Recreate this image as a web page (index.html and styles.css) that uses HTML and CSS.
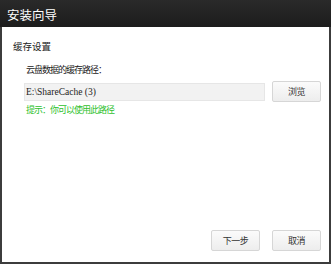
FILE: index.html
```html
<!DOCTYPE html>
<html lang="zh-CN">
<head>
    <meta charset="UTF-8">
    <title>安装向导</title>
    <link rel="stylesheet" href="styles.css">
</head>
<body>
    <div class="wizard">
        <div class="titlebar">安装向导</div>
        <div class="content">
            <div class="section">缓存设置</div>
            <div class="field">
                <div class="label">云盘数据的缓存路径：</div>
                <div class="path-row">
                    <div class="path-input">E:\ShareCache (3)</div>
                    <button class="btn">浏览</button>
                </div>
                <div class="hint">提示：你可以使用此路径</div>
            </div>
            <div class="footer">
                <button class="btn">下一步</button>
                <button class="btn">取消</button>
            </div>
        </div>
    </div>
</body>
</html>
```

FILE: styles.css
```css
html, body { margin: 0; padding: 0; }
body { font-family: "Noto Sans CJK SC", "Noto Sans", sans-serif; width: 331px; height: 264px; overflow: hidden; background: #fff; }
.wizard { width: 331px; height: 264px; display: flex; flex-direction: column; }
.titlebar { height: 27px; background: linear-gradient(#2a2a2a, #1c1c1c); color: #fff; font-size: 12.5px; line-height: 29px; padding-left: 7px; }
.content { flex: 1; display: flex; flex-direction: column; border: 2px solid #3c3c3c; border-top: none; background: #fff; }
.section { font-size: 9.5px; color: #222; padding: 12px 0 0 11px; line-height: 14px; }
.field { padding: 11px 0 0 22px; }
.label { font-size: 9px; letter-spacing: -1px; color: #222; line-height: 12px; padding-left: 2px; }
.path-row { display: flex; align-items: center; gap: 7px; margin-top: 5px; }
.path-input { width: 241px; height: 18px; box-sizing: border-box; background: #f2f2f2; border: 1px solid #e6e6e6; font-family: "Liberation Serif", serif; font-size: 9.5px; line-height: 16px; padding-left: 1px; color: #222; }
.btn { width: 49px; height: 21px; box-sizing: border-box; background: linear-gradient(#fbfbfb, #ededed); border: 1px solid #d6d6d6; border-radius: 2px; font-family: "Noto Sans CJK SC", sans-serif; font-size: 9px; letter-spacing: -0.5px; color: #333; padding: 0; }
.hint { font-size: 9px; letter-spacing: -1px; color: #2ec12e; line-height: 12px; margin-top: 2px; padding-left: 2px; }
.footer { margin-top: auto; display: flex; justify-content: flex-end; gap: 12px; padding: 0 8px 11px 0; }
```
